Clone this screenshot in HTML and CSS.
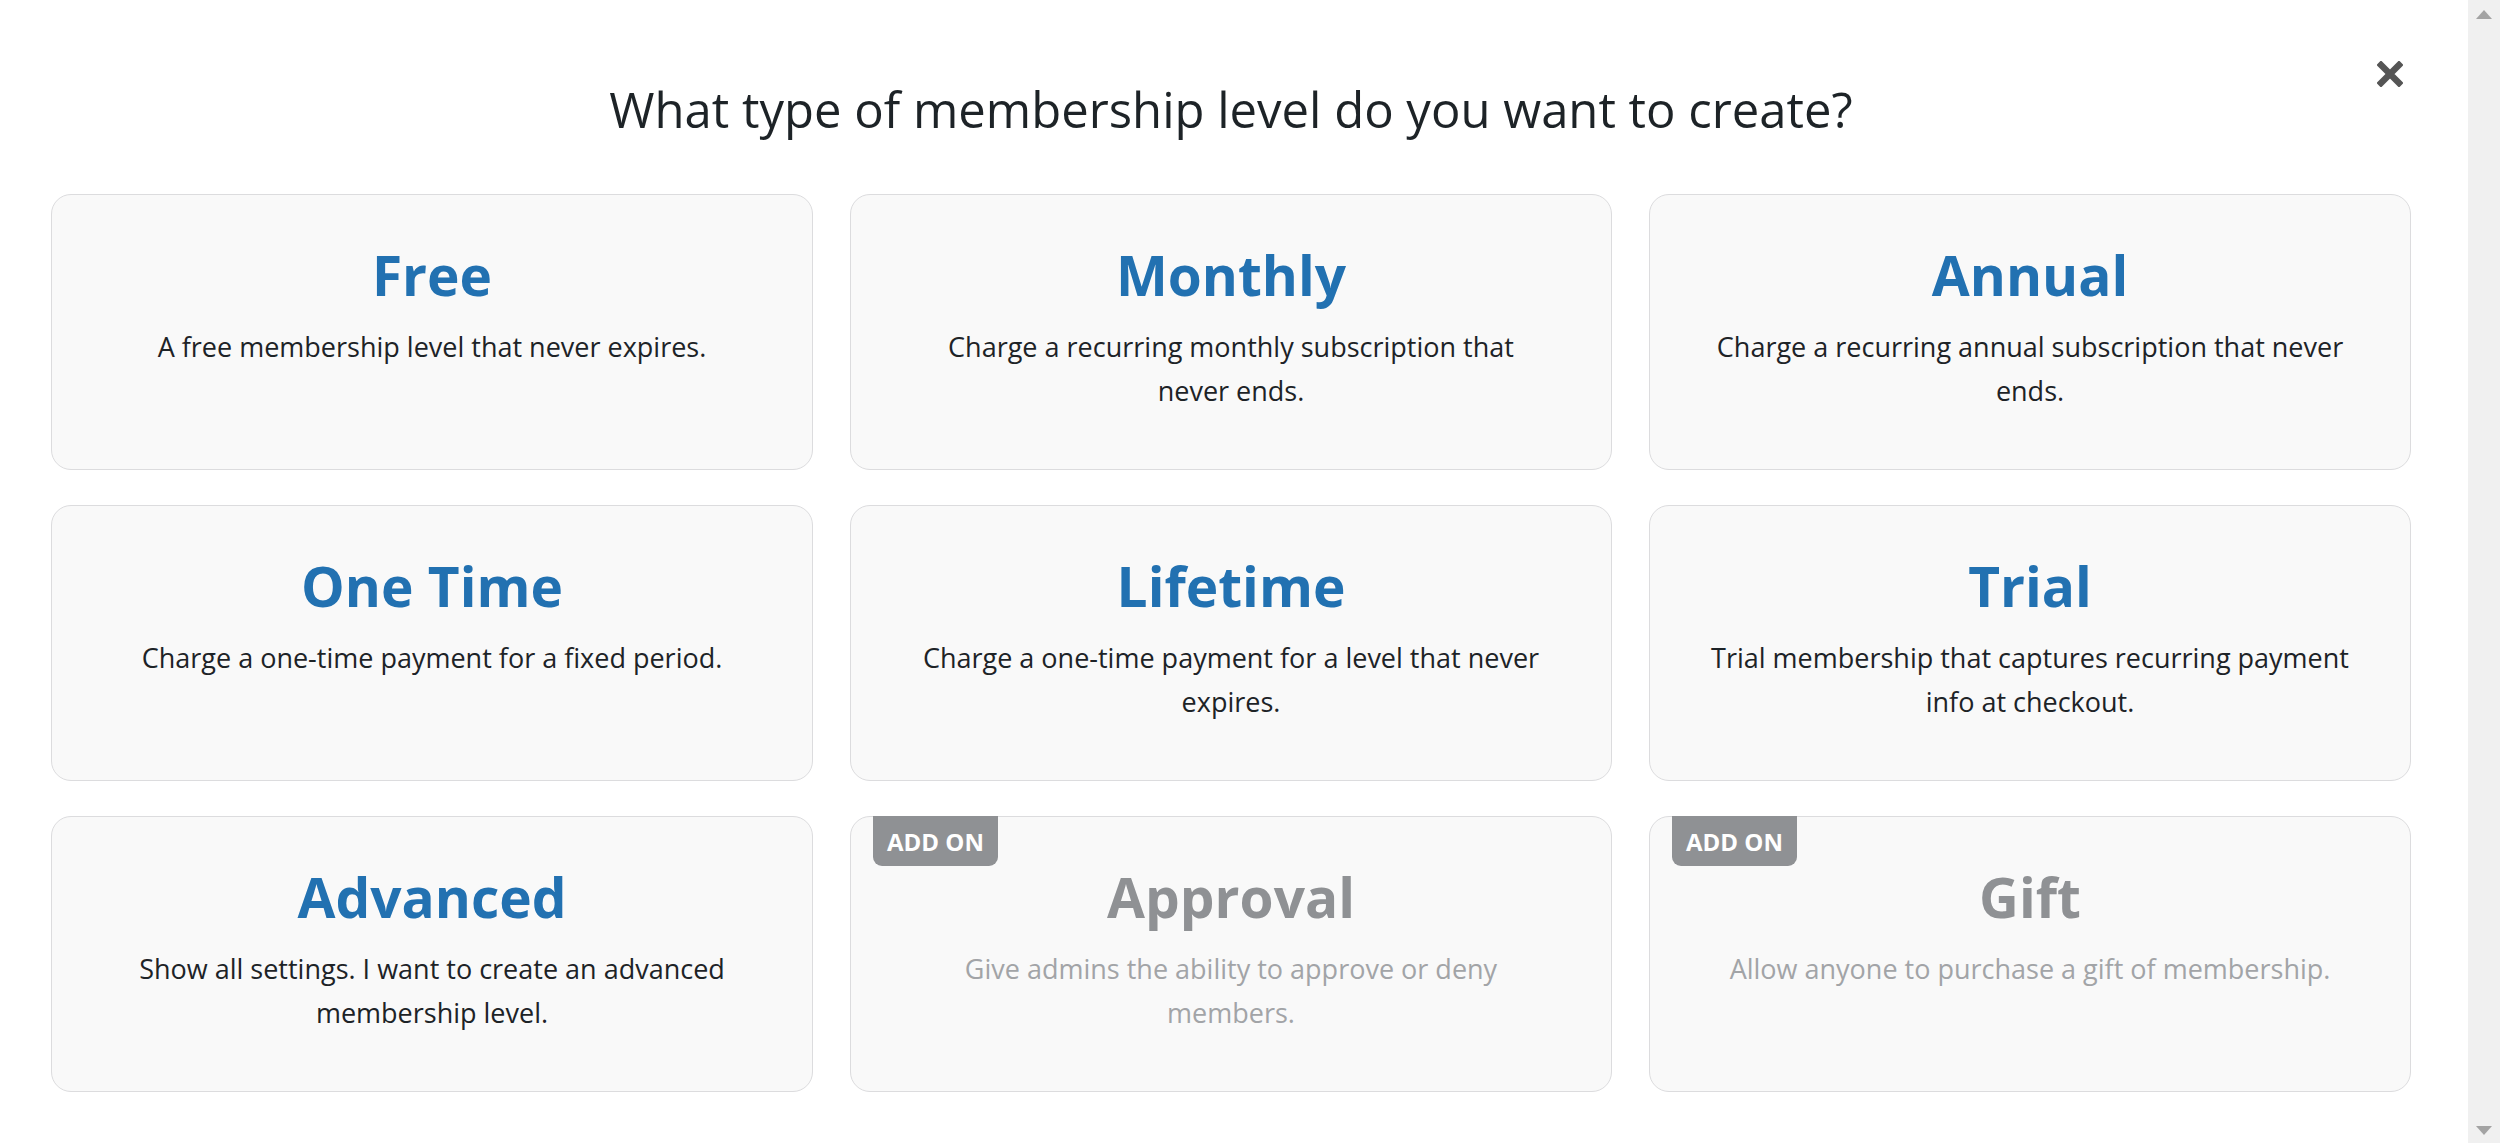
FILE: index.html
```html
<!DOCTYPE html>
<html lang="en">
<head>
<meta charset="utf-8">
<title>Membership level type</title>
<link rel="stylesheet" href="styles.css">
</head>
<body>
<div class="page">
  <div class="modal">
    <button class="close" aria-label="Close">
      <svg viewBox="0 0 26 26" width="26" height="26"><path d="M4 4 L22 22 M22 4 L4 22" stroke="#555" stroke-width="6.5" stroke-linecap="square" fill="none"/></svg>
    </button>
    <h2 class="heading">What type of membership level do you want to create?</h2>
    <div class="grid">
      <div class="card">
        <h3 class="card-title">Free</h3>
        <p class="card-desc">A free membership level that never expires.</p>
      </div>
      <div class="card">
        <h3 class="card-title">Monthly</h3>
        <p class="card-desc">Charge a recurring monthly subscription that never ends.</p>
      </div>
      <div class="card">
        <h3 class="card-title">Annual</h3>
        <p class="card-desc">Charge a recurring annual subscription that never ends.</p>
      </div>
      <div class="card">
        <h3 class="card-title">One Time</h3>
        <p class="card-desc">Charge a one-time payment for a fixed period.</p>
      </div>
      <div class="card">
        <h3 class="card-title">Lifetime</h3>
        <p class="card-desc">Charge a one-time payment for a level that never expires.</p>
      </div>
      <div class="card">
        <h3 class="card-title">Trial</h3>
        <p class="card-desc">Trial membership that captures recurring payment info at checkout.</p>
      </div>
      <div class="card">
        <h3 class="card-title">Advanced</h3>
        <p class="card-desc">Show all settings. I want to create an advanced membership level.</p>
      </div>
      <div class="card card-addon">
        <span class="badge">ADD ON</span>
        <h3 class="card-title">Approval</h3>
        <p class="card-desc">Give admins the ability to approve or deny members.</p>
      </div>
      <div class="card card-addon">
        <span class="badge">ADD ON</span>
        <h3 class="card-title">Gift</h3>
        <p class="card-desc">Allow anyone to purchase a gift of membership.</p>
      </div>
    </div>
  </div>
  <div class="scrollbar">
    <span class="arrow arrow-up"></span>
    <span class="arrow arrow-down"></span>
  </div>
</div>
</body>
</html>
```

FILE: styles.css
```css
html, body {
  margin: 0;
  padding: 0;
  height: 100%;
  overflow: hidden;
  background: #ffffff;
}

body {
  font-family: "Open Sans", "Noto Sans", sans-serif;
  color: #1d2327;
}

.page {
  display: flex;
  height: 1143px;
}

.modal {
  position: relative;
  flex: 1;
  padding: 80px 57px 0 51px;
  box-sizing: border-box;
}

.close {
  position: absolute;
  top: 61px;
  right: 65px;
  width: 26px;
  height: 26px;
  padding: 0;
  border: 0;
  background: transparent;
  display: flex;
}

.heading {
  margin: 0 0 56px;
  font-size: 49px;
  line-height: 58px;
  font-weight: 400;
  text-align: center;
  color: #1d2327;
}

.grid {
  display: grid;
  grid-template-columns: repeat(3, 1fr);
  column-gap: 37px;
  row-gap: 35px;
}

.card {
  position: relative;
  box-sizing: border-box;
  height: 276px;
  padding: 46px 60px 0;
  background: #f9f9f9;
  border: 1px solid #dcdcde;
  border-radius: 20px;
  text-align: center;
}

.card-title {
  margin: 0;
  font-size: 55px;
  line-height: 67px;
  font-weight: 700;
  color: #2271b1;
}

.card-desc {
  margin: 17px 0 0;
  font-size: 27px;
  line-height: 44px;
  color: #1d2327;
}

.card-addon .card-title {
  color: #8f9194;
}

.card-addon .card-desc {
  color: #a2a4a7;
}

.badge {
  position: absolute;
  top: -1px;
  left: 22px;
  height: 50px;
  padding: 0 14px;
  display: flex;
  align-items: center;
  background: #8f9194;
  color: #ffffff;
  font-size: 24px;
  font-weight: 700;
  border-radius: 0 0 9px 9px;
}

.scrollbar {
  width: 32px;
  flex: none;
  background: #f0f0f0;
  display: flex;
  flex-direction: column;
  justify-content: space-between;
  align-items: center;
  padding: 10px 0 8px;
  box-sizing: border-box;
}

.arrow {
  width: 0;
  height: 0;
  border-left: 8px solid transparent;
  border-right: 8px solid transparent;
}

.arrow-up {
  border-bottom: 9px solid #a3a3a3;
}

.arrow-down {
  border-top: 9px solid #a3a3a3;
}
```
